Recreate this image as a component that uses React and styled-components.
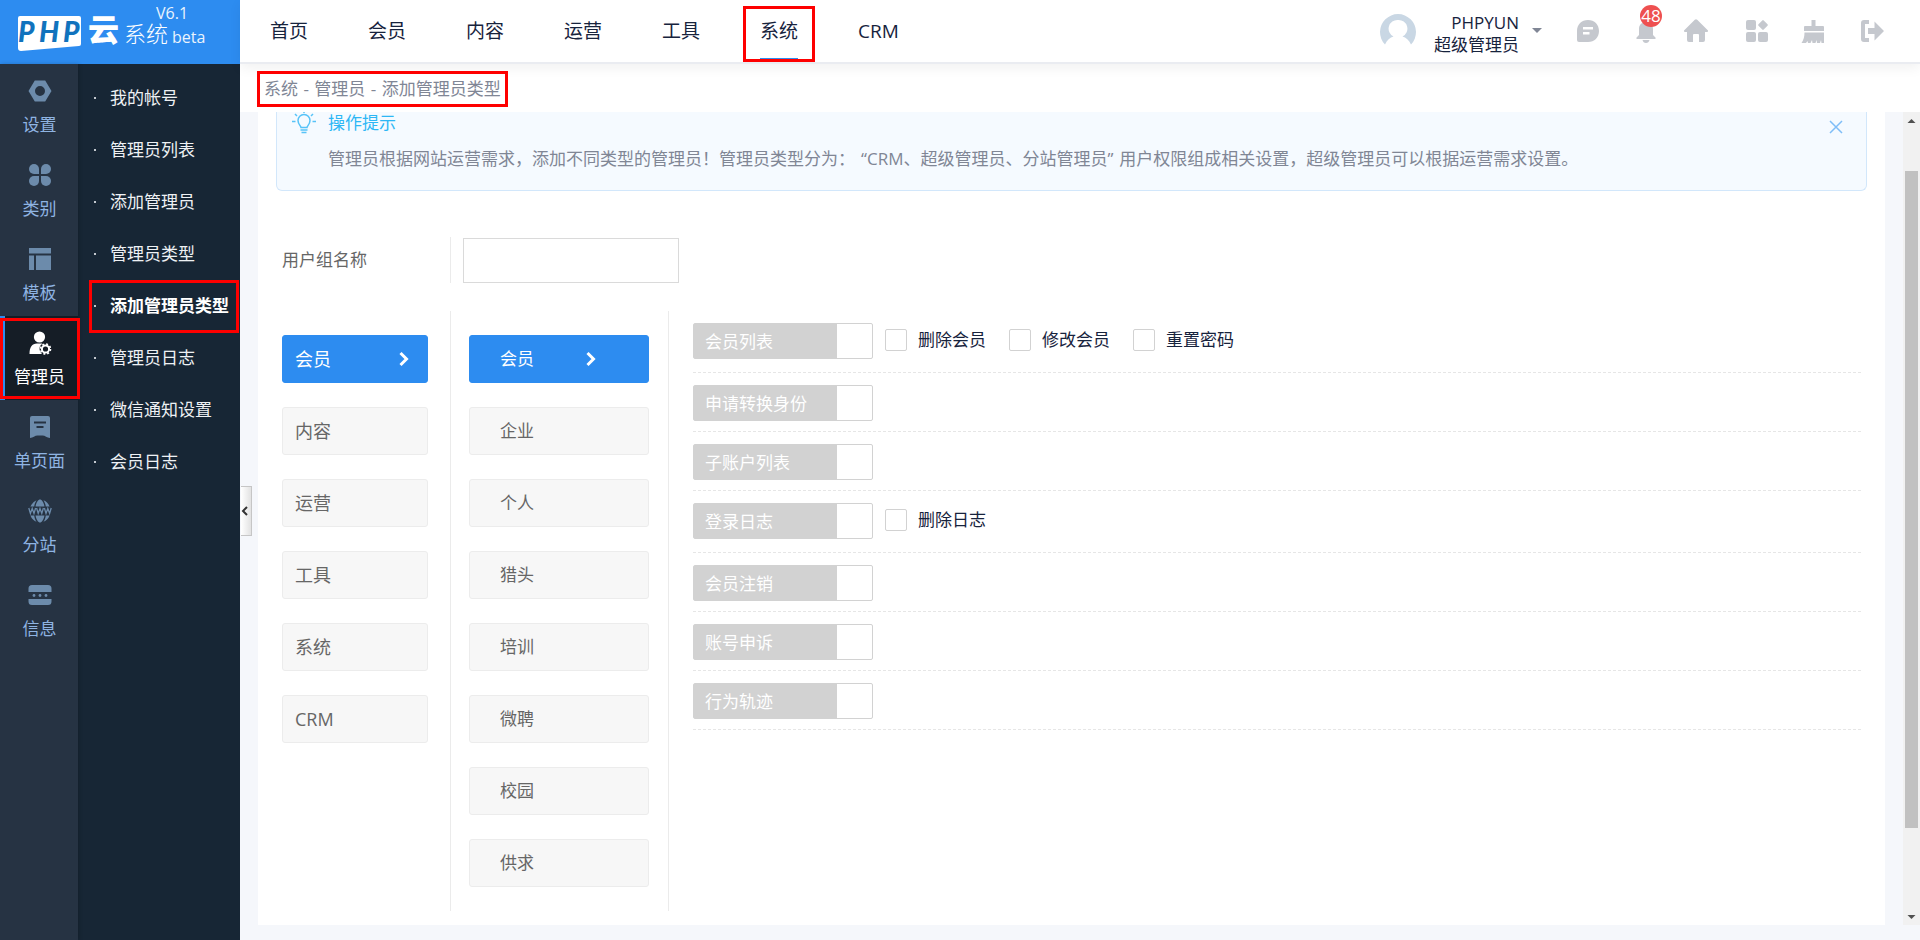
import React from "react";
import styled, { createGlobalStyle, css } from "styled-components";

const Global = createGlobalStyle`
  * { box-sizing: border-box; }
  body {
    margin: 0;
    font-family: "Open Sans", "Noto Sans CJK SC", sans-serif;
    font-size: 17px;
    line-height: 24px;
    color: #17233d;
    background: #f5f7fb;
  }
  button, input { font: inherit; color: inherit; }
  button { border: 0; padding: 0; background: none; cursor: pointer; }
  a { color: inherit; text-decoration: none; }
`;

const highlight = css`
  position: relative;
  &::after {
    content: "";
    position: absolute;
    inset: ${(p) => p.$inset || "0"};
    border: 3px solid #fe0000;
    pointer-events: none;
    z-index: 4;
  }
`;

const Shell = styled.div`
  display: grid;
  grid-template-columns: 240px minmax(0, 1fr);
  grid-template-rows: 64px minmax(0, 1fr);
  height: 100vh;
  min-height: 600px;
`;

const Logo = styled.a`
  display: block;
  background: #2d8cf0;
  svg { display: block; }
`;

const Header = styled.header`
  display: flex;
  align-items: center;
  justify-content: space-between;
  background: #fff;
  border-bottom: 2px solid #eaecf1;
  box-shadow: 0 4px 12px rgba(0, 0, 0, 0.06);
  z-index: 3;
`;

const Nav = styled.nav`
  display: flex;
  align-self: stretch;
  gap: 26px;
  padding-left: 13px;
`;

const NavLink = styled.a`
  display: flex;
  align-items: center;
  padding: 0 17px;
  font-size: 19px;
  ${(p) => p.$active && highlight}
`;

const NavText = styled.span`
  display: flex;
  align-items: center;
  height: 58px;
  border-bottom: 2px solid ${(p) => (p.$active ? "#2d8cf0" : "transparent")};
  border-top: 2px solid transparent;
`;

const Tools = styled.div`
  display: flex;
  align-items: center;
  padding-right: 36px;
`;

const Account = styled.button`
  display: flex;
  align-items: center;
  gap: 13px;
  margin-right: 34px;
`;

const AccountName = styled.span`
  display: flex;
  flex-direction: column;
  align-items: flex-end;
  padding: 6px 0 0 5px;
  line-height: 22px;
`;

const ToolIcons = styled.div`
  display: grid;
  grid-template-columns: 58px 50px 61px 56px 59px 24px;
  color: #c5c8ce;
`;

const ToolButton = styled.button`
  position: relative;
  width: 24px;
  height: 24px;
  svg { display: block; }
`;

const Badge = styled.span`
  position: absolute;
  top: -14px;
  left: 6px;
  display: flex;
  justify-content: center;
  width: 22px;
  height: 22px;
  border-radius: 11px;
  background: #ee5050;
  color: #fff;
  line-height: 22px;
`;

const Sidebar = styled.aside`
  display: grid;
  grid-template-columns: 78px 162px;
  background: #172635;
`;

const Rail = styled.nav`
  background: #263343;
  box-shadow: 1px 0 4px rgba(0, 0, 0, 0.2);
`;

const RailLink = styled.a`
  display: flex;
  flex-direction: column;
  align-items: center;
  gap: 10px;
  height: 84px;
  padding: 15px 0 0 1px;
  color: #8fb4e2;
  svg { display: block; color: #6c8bab; }
  ${(p) =>
    p.$active &&
    css`
      ${highlight}
      background: #151d26;
      box-shadow: inset 5px 0 0 #2d8cf0;
      color: #fff;
      svg { color: #fff; }
    `}
`;

const SubNav = styled.nav`
  padding-top: 8px;
`;

const SubLink = styled.a`
  display: flex;
  align-items: center;
  gap: 14px;
  height: 52px;
  padding-left: 16px;
  color: #eef1f4;
  white-space: nowrap;
  &::before {
    content: "";
    width: 2px;
    height: 2px;
    background: #c3c9cf;
  }
  ${(p) =>
    p.$active &&
    css`
      ${highlight}
      color: #fff;
      font-weight: 700;
    `}
`;

const Main = styled.main`
  position: relative;
  display: flex;
  flex-direction: column;
  min-width: 0;
  padding-bottom: 15px;
`;

const Crumbs = styled.div`
  display: flex;
  align-items: center;
  height: 48px;
  padding: 2px 0 0 24px;
  background: #fff;
  color: #808695;
  flex: none;
`;

const CrumbText = styled.span`
  ${highlight}
`;

const Dash = styled.span`
  margin: 0 1px;
`;

const CollapseHandle = styled.button`
  position: absolute;
  left: 1px;
  top: 422px;
  width: 11px;
  height: 50px;
  border: 1px solid #c6c6c6;
  border-left: 0;
  background: linear-gradient(90deg, #fff, #e2e2e2);
  z-index: 2;
  svg { display: block; }
`;

const Scroller = styled.div`
  display: flex;
  flex: 1;
  min-height: 0;
`;

const Panel = styled.section`
  flex: 1;
  min-width: 0;
  margin: 0 18px;
  padding: 0 18px;
  background: #fff;
  overflow: hidden;
`;

const Tip = styled.div`
  display: flex;
  align-items: flex-start;
  height: 79px;
  padding: 0 23px 0 15px;
  background: #f5faff;
  border: 1px solid #d2e7fb;
  border-top: 0;
  border-radius: 0 0 6px 6px;
  svg { display: block; }
`;

const TipBody = styled.div`
  flex: 1;
  min-width: 0;
  margin-left: 12px;
`;

const TipTitle = styled.h2`
  margin: 0 0 13px;
  font-size: 17px;
  font-weight: 400;
  line-height: 22px;
  color: #2db7f5;
`;

const TipText = styled.p`
  margin: 0;
  color: #808695;
`;

const Quoted = styled.span`
  margin: 0 6px;
`;

const TipClose = styled.button`
  margin-top: 8px;
`;

const FormRow = styled.div`
  display: flex;
  align-items: center;
  margin: 46px 0 28px 6px;
`;

const FieldLabel = styled.label`
  display: flex;
  align-items: center;
  width: 169px;
  height: 46px;
  border-right: 1px solid #ebebeb;
  color: #666;
`;

const TextInput = styled.input`
  width: 216px;
  height: 45px;
  margin-left: 12px;
  padding: 0 12px;
  border: 1px solid #dadada;
  background: #fff;
`;

const Columns = styled.div`
  display: flex;
  padding-left: 6px;
`;

const MenuColumn = styled.div`
  display: flex;
  flex-direction: column;
  gap: 24px;
  width: ${(p) => (p.$wide ? 218 : 169)}px;
  min-height: 600px;
  padding: 24px ${(p) => (p.$wide ? "19px" : "22px")} 24px ${(p) => (p.$wide ? "18px" : "0")};
  border-right: 1px solid #ebebeb;
`;

const MenuButton = styled.button`
  display: flex;
  align-items: center;
  justify-content: space-between;
  height: 48px;
  padding: 0 ${(p) => (p.$wide ? 52 : 18)}px 0 ${(p) => (p.$wide ? 30 : 12)}px;
  border: 1px solid ${(p) => (p.$active ? "#2d8cf0" : "#ececec")};
  border-radius: 3px;
  background: ${(p) => (p.$active ? "#2d8cf0" : "#f7f7f7")};
  color: ${(p) => (p.$active ? "#fff" : "#666")};
  font-size: ${(p) => (p.$wide ? 17 : 18)}px;
  text-align: left;
`;

const Permissions = styled.div`
  flex: 1;
  min-width: 0;
  margin: 0 6px 0 24px;
`;

const PermissionRow = styled.div`
  display: flex;
  align-items: flex-start;
  gap: 12px;
  min-height: ${(p) => (p.$tall ? 62 : 59)}px;
  padding-top: 12px;
  border-bottom: 1px dashed #e6e6e6;
`;

const Switch = styled.button`
  display: flex;
  align-items: center;
  width: 180px;
  height: 36px;
  padding: 2px 0 0 11px;
  border: 1px solid #d2d2d2;
  border-radius: 2px;
  background: linear-gradient(90deg, #d2d2d2 143px, #fff 143px);
  color: #fff;
`;

const Check = styled.label`
  display: flex;
  align-items: center;
  gap: 11px;
  width: 112px;
  height: 34px;
  white-space: nowrap;
`;

const CheckInput = styled.input`
  appearance: none;
  flex: none;
  width: 22px;
  height: 22px;
  margin: 0;
  border: 1px solid #d2d2d2;
  border-radius: 2px;
  background: #fff;
  &:checked { background: #2d8cf0; }
`;

const ScrollTrack = styled.div`
  display: flex;
  flex-direction: column;
  width: 17px;
  background: #f1f1f1;
  svg { display: block; flex: none; }
`;

const TrackSpace = styled.div`
  flex: ${(p) => p.$grow};
`;

const Thumb = styled.div`
  flex: 657;
  margin: 0 2px;
  background: #c1c1c1;
`;

const Icon = ({ children }) => (
  <svg width="24" height="24" viewBox="0 0 24 24" fill="currentColor" aria-hidden="true">
    {children}
  </svg>
);

const railItems = [
  {
    label: "设置",
    icon: <path fillRule="evenodd" d="M6.8 1.500h10.400L23.500 12l-6.300 10.500H6.800L.5 12zM12 7a5 5 0 1 0 0 10 5 5 0 0 0 0-10z" />,
  },
  {
    label: "类别",
    icon: (
      <>
        <path d="M6 1a5 5 0 0 1 5 5v5H6A5 5 0 0 1 6 1z" />
        <path d="M18 1a5 5 0 0 1 0 10h-5V6a5 5 0 0 1 5-5z" />
        <path d="M6 13h5v5a5 5 0 1 1-5-5z" />
        <path d="M13 13h5a5 5 0 1 1-5 5z" />
      </>
    ),
  },
  {
    label: "模板",
    icon: <path d="M1 1h22v5.500H1zM1 8.500h5V23H1zM8 8.500h15V23H8z" />,
  },
  {
    label: "管理员",
    active: true,
    icon: (
      <>
        <circle cx="11.500" cy="6" r="5.600" />
        <path d="M9 12.500h5.500c-2 1.500-3 3-3 5 0 2.200 1 4 2.500 5.500H1.500C1.500 16.500 4 12.500 9 12.500z" />
        <circle cx="17.500" cy="18" r="3.600" fill="none" stroke="currentColor" strokeWidth="2" />
        <circle cx="17.500" cy="18" r="5" fill="none" stroke="currentColor" strokeWidth="1.600" strokeDasharray="2 1.930" />
      </>
    ),
  },
  {
    label: "单页面",
    icon: <path fillRule="evenodd" d="M4 1h16a2 2 0 0 1 2 2v20c-3-.2-5-2.500-7.500-2.500-1.500 0-1.500 0-2.500 0s-1 0-2.500 0C7 20.500 5 22.800 2 23V3a2 2 0 0 1 2-2zM6 6.500v2h12v-2zM8.500 11v2h7v-2z" />,
  },
  {
    label: "分站",
    icon: (
      <>
        <path d="M3.600 5.500A11 11 0 0 1 8.500 1.200C7.300 3 6.500 5 6.200 7.500H2.400zM7.500 7.500c.5-3.200 1.900-6 3.900-7h1.200c2 1 3.400 3.800 3.900 7zM15.500 1.200a11 11 0 0 1 6.100 6.300h-3.800c-.3-2.500-1.100-4.500-2.300-6.300z" />
        <path d="M2.400 16.500h3.800c.3 2.500 1.100 4.500 2.300 6.300a11 11 0 0 1-6.100-6.300zM7.500 16.500h9c-.5 3.200-1.900 6-3.900 7h-1.200c-2-1-3.400-3.800-3.900-7zM17.800 16.500h3.800a11 11 0 0 1-6.100 6.300c1.200-1.800 2-3.800 2.300-6.300z" />
        <path d="M.8 9l1.600 5.500L4.200 9.500 6 14.500 7.600 9M8.600 9l1.600 5.500L12 9.500l1.800 5L15.400 9M16.400 9l1.600 5.500 1.800-5 1.800 5L23.200 9" fill="none" stroke="currentColor" strokeWidth="1.300" />
      </>
    ),
  },
  {
    label: "信息",
    icon: (
      <>
        <path d="M4 2h16a3.500 3.500 0 0 1 3.500 3.500V9H.5V5.500A3.500 3.500 0 0 1 4 2zM.5 16h23v2.500A3.500 3.500 0 0 1 20 22H4a3.500 3.500 0 0 1-3.500-3.500z" />
        <circle cx="6" cy="12.500" r="1.400" />
        <circle cx="12" cy="12.500" r="1.400" />
        <circle cx="18" cy="12.500" r="1.400" />
      </>
    ),
  },
];

const toolItems = [
  {
    label: "消息",
    icon: <path fillRule="evenodd" d="M12 1c6.500 0 11 4.500 11 11s-4.500 11-11 11H3a2 2 0 0 1-2-2v-9C1 5.500 5.500 1 12 1zM7 8v2.600h10V8zm0 5v2.600h6.500V13z" />,
  },
  {
    label: "通知",
    badge: "48",
    icon: <path d="M12 1.500c1 0 1.600.7 1.600 1.600C17 3.900 19 6.600 19 10v6l2.500 2.500V20h-19v-1.500L5 16v-6c0-3.400 2-6.100 5.400-6.900 0-.9.600-1.600 1.600-1.600zM8.500 21h7c-.5 1.800-1.700 3-3.500 3s-3-1.200-3.500-3z" />,
  },
  {
    label: "首页",
    icon: <path d="M10.800.8a1.700 1.700 0 0 1 2.400 0L24 11.500c.3.700 0 1.500-1 1.500h-2v8a2 2 0 0 1-2 2h-4v-7a1 1 0 0 0-1-1h-4a1 1 0 0 0-1 1v7H5a2 2 0 0 1-2-2v-8H1c-1 0-1.300-.8-1-1.500z" />,
  },
  {
    label: "应用",
    icon: (
      <>
        <rect x="1" y="1" width="10" height="10" rx="2" />
        <rect x="1" y="13" width="10" height="10" rx="2" />
        <rect x="13" y="13" width="10" height="10" rx="2" />
        <rect x="14.300" y="2.300" width="7.400" height="7.400" rx="1" transform="rotate(45 18 6)" />
      </>
    ),
  },
  {
    label: "清理缓存",
    icon: <path d="M10.500 1h4v6H22a1 1 0 0 1 1 1v4H3V8a1 1 0 0 1 1-1h6.500zM3.500 13.500H23V24h-2.500l-.5-3-1 3h-3l-.5-3-1 3h-3l-.5-3-1.500 3H7l-.5-2-1.500 2H.5c2-3 3-6 3-10.500z" />,
  },
  {
    label: "退出",
    icon: (
      <>
        <path d="M9 1v4H5v14h4v4H4a3 3 0 0 1-3-3V4a3 3 0 0 1 3-3z" />
        <path d="M14.500 2.500L24 12l-9.500 9.500V15H8V9h6.500z" />
      </>
    ),
  },
];

const navItems = ["首页", "会员", "内容", "运营", "工具", "系统", "CRM"];
const subItems = ["我的帐号", "管理员列表", "添加管理员", "管理员类型", "添加管理员类型", "管理员日志", "微信通知设置", "会员日志"];
const groups = ["会员", "内容", "运营", "工具", "系统", "CRM"];
const modules = ["会员", "企业", "个人", "猎头", "培训", "微聘", "校园", "供求"];
const permissions = [
  { name: "会员列表", actions: ["删除会员", "修改会员", "重置密码"] },
  { name: "申请转换身份" },
  { name: "子账户列表" },
  { name: "登录日志", actions: ["删除日志"] },
  { name: "会员注销" },
  { name: "账号申诉" },
  { name: "行为轨迹" },
];

const ChevronRight = () => (
  <svg width="10" height="16" viewBox="0 0 10 16" fill="none" stroke="#fff" strokeWidth="3" aria-hidden="true">
    <path d="M1.500 2L7.500 8l-6 6" />
  </svg>
);

const Menu = ({ items, wide }) => (
  <MenuColumn $wide={wide}>
    {items.map((name, i) => (
      <MenuButton key={name} type="button" $wide={wide} $active={i === 0}>
        {name}
        {i === 0 && <ChevronRight />}
      </MenuButton>
    ))}
  </MenuColumn>
);

export default function App() {
  return (
    <>
      <Global />
      <Shell>
        <Logo href="#" aria-label="PHP云系统">
          <svg width="240" height="64" viewBox="0 0 240 64">
            <path d="M20 16h59q2 0 2 2v26q0 2-2 2l-58 5q-3 0-3-3V18q0-2 2-2z" fill="#fff" />
            <g fill="#1173bd" fontFamily="Lato, sans-serif" fontWeight="900" fontStyle="italic" fontSize="28">
              <text x="18" y="42">P</text>
              <text x="39" y="42">H</text>
              <text x="63" y="42">P</text>
            </g>
            <g fill="#fff" fontFamily="'Open Sans', 'Noto Sans CJK SC', sans-serif">
              <text x="88" y="41" fontSize="31" fontWeight="900">云</text>
              <text x="124" y="42" fontSize="22" fontWeight="300">系统</text>
              <text x="156" y="19" fontSize="16" opacity="0.9">V6.1</text>
              <text x="172" y="43" fontSize="16" opacity="0.9">beta</text>
            </g>
          </svg>
        </Logo>

        <Header>
          <Nav aria-label="主导航">
            {navItems.map((name) => (
              <NavLink key={name} href="#" $active={name === "系统"} $inset="6px 0 0">
                <NavText $active={name === "系统"}>{name}</NavText>
              </NavLink>
            ))}
          </Nav>
          <Tools>
            <Account type="button">
              <svg width="36" height="36" viewBox="0 0 36 36" aria-hidden="true">
                <path
                  fill="#c9d7e4"
                  fillRule="evenodd"
                  d="M5 31.500A18 18 0 1 1 31 31.500C29 27 26 24.500 22.500 23.500A8.700 8.700 0 0 0 18 7a8.700 8.700 0 0 0-4.500 16.500C10 24.500 7 27 5 31.500z"
                />
              </svg>
              <AccountName>
                <span>PHPYUN</span>
                <span>超级管理员</span>
              </AccountName>
              <svg width="10" height="6" viewBox="0 0 10 6" aria-hidden="true">
                <path d="M0 0h10L5 5z" fill="#808695" />
              </svg>
            </Account>
            <ToolIcons>
              {toolItems.map((t) => (
                <ToolButton key={t.label} type="button" aria-label={t.label}>
                  <Icon>{t.icon}</Icon>
                  {t.badge && <Badge>{t.badge}</Badge>}
                </ToolButton>
              ))}
            </ToolIcons>
          </Tools>
        </Header>

        <Sidebar>
          <Rail aria-label="系统菜单">
            {railItems.map((r) => (
              <RailLink key={r.label} href="#" $active={r.active} $inset="2px -2px 1px 0">
                <Icon>{r.icon}</Icon>
                {r.label}
              </RailLink>
            ))}
          </Rail>
          <SubNav aria-label="管理员菜单">
            {subItems.map((name) => (
              <SubLink key={name} href="#" $active={name === "添加管理员类型"} $inset="0 1px -1px 11px">
                {name}
              </SubLink>
            ))}
          </SubNav>
        </Sidebar>

        <Main>
          <Crumbs>
            <CrumbText $inset="-6px -7px">
              系统 <Dash>-</Dash> 管理员 <Dash>-</Dash> 添加管理员类型
            </CrumbText>
          </Crumbs>
          <CollapseHandle type="button" aria-label="收起菜单">
            <svg width="8" height="10" viewBox="0 0 8 10" fill="none" stroke="#333" strokeWidth="2">
              <path d="M6 1L2 5l4 4" />
            </svg>
          </CollapseHandle>
          <Scroller>
            <Panel>
              <Tip>
                <svg width="24" height="22" viewBox="0 0 24 22" fill="none" stroke="#57c3f8" strokeWidth="1.500">
                  <path d="M9 15.500c0-1.500-3-3-3-7a6 6 0 0 1 12 0c0 4-3 5.500-3 7zM8.500 18h7M9.500 20.500h5M12 0v1M3 2l2 2M21 2l-2 2M0 9.500h3.500M20.500 9.500H24" />
                </svg>
                <TipBody>
                  <TipTitle>操作提示</TipTitle>
                  <TipText>
                    管理员根据网站运营需求，添加不同类型的管理员！管理员类型分为：
                    <Quoted>“CRM、超级管理员、分站管理员”</Quoted>
                    用户权限组成相关设置，超级管理员可以根据运营需求设置。
                  </TipText>
                </TipBody>
                <TipClose type="button" aria-label="关闭">
                  <svg width="14" height="14" viewBox="0 0 14 14" stroke="#7fbdf7" strokeWidth="1.500">
                    <path d="M1 1l12 12M13 1L1 13" />
                  </svg>
                </TipClose>
              </Tip>
              <FormRow>
                <FieldLabel htmlFor="group-name">用户组名称</FieldLabel>
                <TextInput id="group-name" type="text" />
              </FormRow>
              <Columns>
                <Menu items={groups} />
                <Menu items={modules} wide />
                <Permissions>
                  {permissions.map((p) => (
                    <PermissionRow key={p.name} $tall={!!p.actions}>
                      <Switch type="button" role="switch" aria-checked="false">
                        {p.name}
                      </Switch>
                      {p.actions?.map((a) => (
                        <Check key={a}>
                          <CheckInput type="checkbox" />
                          {a}
                        </Check>
                      ))}
                    </PermissionRow>
                  ))}
                </Permissions>
              </Columns>
            </Panel>
            <ScrollTrack aria-hidden="true">
              <svg width="17" height="17" viewBox="0 0 17 17" fill="#505050">
                <path d="M8.500 7l4 4h-8z" />
              </svg>
              <TrackSpace $grow={42} />
              <Thumb />
              <TrackSpace $grow={80} />
              <svg width="17" height="17" viewBox="0 0 17 17" fill="#505050">
                <path d="M8.500 11l-4-4h8z" />
              </svg>
            </ScrollTrack>
          </Scroller>
        </Main>
      </Shell>
    </>
  );
}
